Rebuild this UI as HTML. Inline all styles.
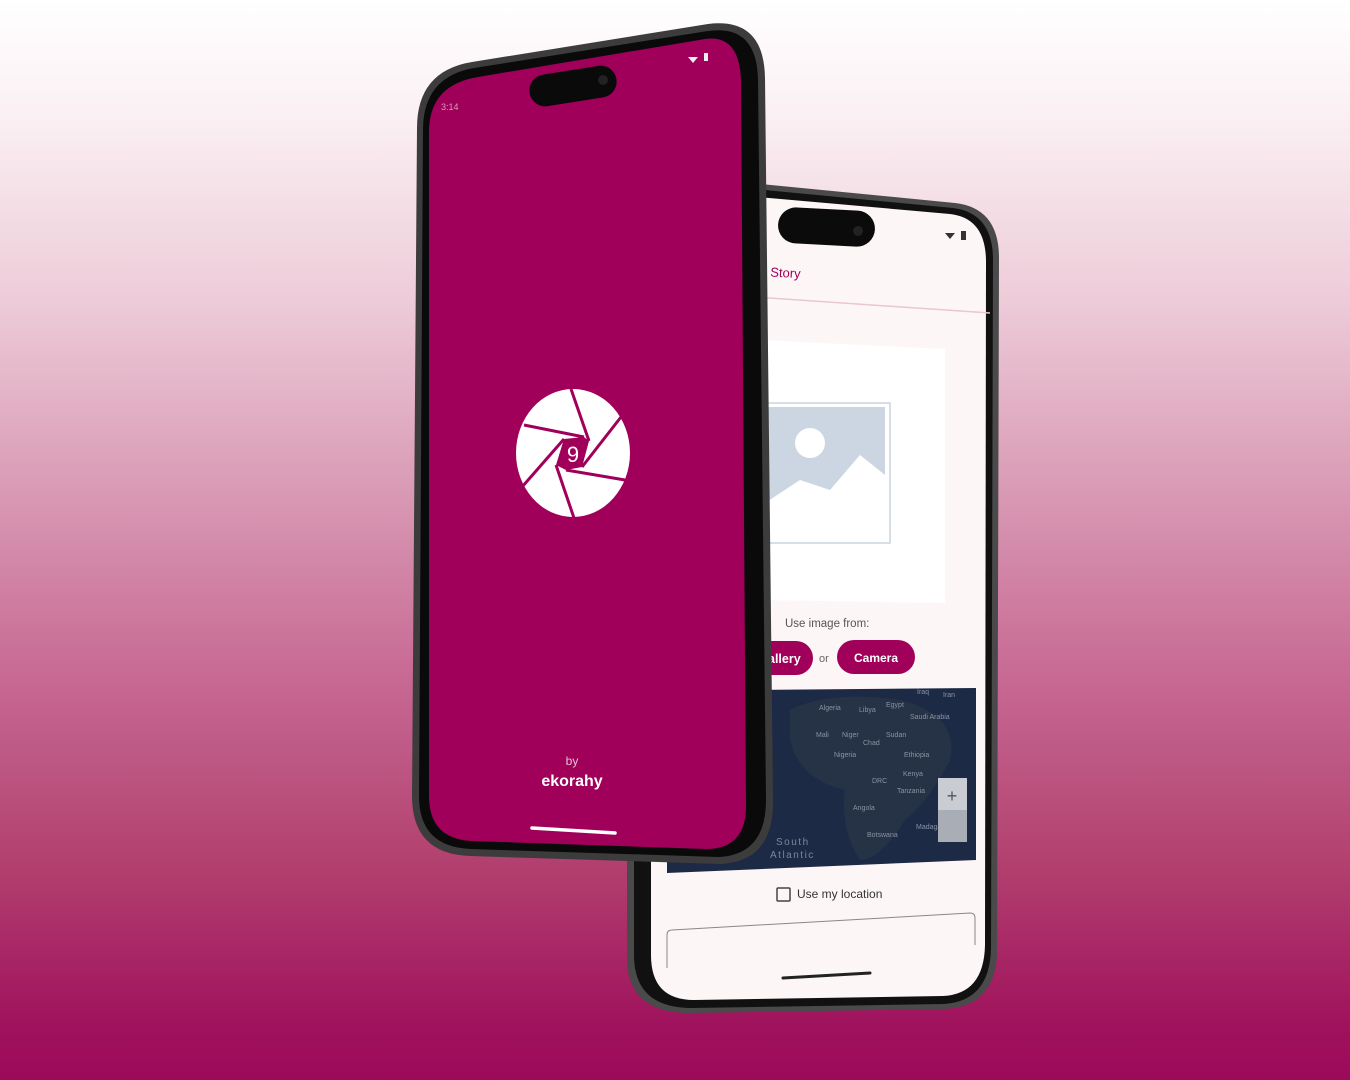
<!DOCTYPE html>
<html><head><meta charset="utf-8"><style>
html,body{margin:0;padding:0;width:1350px;height:1080px;overflow:hidden}
body{background:linear-gradient(180deg,#ffffff 0%,#fbf1f4 10%,#edcbd8 28%,#d99bb5 45%,#c86b95 62%,#b2406f 80%,#a0125d 95%,#9c0a5a 100%);font-family:"Liberation Sans",sans-serif}
svg{position:absolute;left:0;top:0}
</style></head><body>
<svg width="1350" height="1080" viewBox="0 0 1350 1080" xmlns="http://www.w3.org/2000/svg" font-family="Liberation Sans, sans-serif">
<!-- back phone -->
<path d="M700,178 L955,203 Q999,208 999,258 L997,952 Q996,1006 945,1009 L690,1013 Q627,1013 627,958 L627,195 Z" fill="#4a4a4a"/>
<path d="M702,184 L953,208 Q993,213 993,260 L991,948 Q990,1001 944,1004 L692,1008 Q634,1008 634,955 L634,200 Z" fill="#111"/>
<path d="M702,192 L950,214 Q986,218 986,262 L985,945 Q984,994 943,996 L694,1000 Q651,1000 651,955 L651,202 Z" fill="#fdf6f7"/>
<rect x="778" y="209" width="97" height="36" rx="18" fill="#0b0b0b" transform="rotate(3 826 227)"/>
<circle cx="858" cy="231" r="5" fill="#222"/>
<path d="M945,233 l5,6 l5,-6 z" fill="#333"/><rect x="961" y="231" width="5" height="9" fill="#333"/>
<text x="760" y="276" font-size="13" fill="#a0005a" transform="rotate(3 760 276)">v Story</text>
<path d="M740,296 L990,313" stroke="#e9c6d2" stroke-width="1.5"/>
<path d="M760,340 L945,349 L945,603 L760,600 Z" fill="#ffffff"/>
<rect x="760" y="403" width="130" height="140" fill="#fff" stroke="#c9d3e0" stroke-width="1.5"/>
<rect x="762" y="407" width="123" height="130" fill="#ccd6e2"/>
<path d="M762,505 L800,480 L830,490 L860,455 L885,475 L885,537 L762,537 Z" fill="#fff"/>
<circle cx="810" cy="443" r="15" fill="#fff"/>
<text x="785" y="627" font-size="11.5" fill="#555">Use image from:</text>
<rect x="740" y="641" width="73" height="34" rx="17" fill="#a0005a"/>
<text x="768" y="663" font-size="12.5" font-weight="bold" fill="#fff">allery</text>
<text x="819" y="662" font-size="11" fill="#666">or</text>
<rect x="837" y="640" width="78" height="34" rx="17" fill="#a0005a"/>
<text x="876" y="662" font-size="12" font-weight="bold" fill="#fff" text-anchor="middle">Camera</text>
<path d="M740,690 L976,688 L976,860 L667,873 L667,692 Z" fill="#1d2a45"/>
<path d="M790,710 Q830,690 900,700 Q960,715 950,760 Q930,800 905,820 Q880,860 860,860 Q840,830 845,790 Q800,780 790,740 Z" fill="#263246"/>
<g font-size="7" fill="#8a93a3">
<text x="819" y="710">Algeria</text><text x="859" y="712">Libya</text><text x="886" y="707">Egypt</text>
<text x="910" y="719">Saudi Arabia</text><text x="943" y="697">Iran</text><text x="917" y="694">Iraq</text>
<text x="816" y="737">Mali</text><text x="842" y="737">Niger</text><text x="886" y="737">Sudan</text>
<text x="863" y="745">Chad</text><text x="834" y="757">Nigeria</text><text x="904" y="757">Ethiopia</text>
<text x="903" y="776">Kenya</text><text x="872" y="783">DRC</text><text x="897" y="793">Tanzania</text>
<text x="853" y="810">Angola</text><text x="916" y="829">Madagascar</text><text x="867" y="837">Botswana</text>
</g>
<text x="776" y="845" font-size="10" fill="#7d8699" letter-spacing="1.5">South</text>
<text x="770" y="858" font-size="10" fill="#7d8699" letter-spacing="1.5">Atlantic</text>
<rect x="938" y="778" width="29" height="64" fill="#c9ccd2"/>
<rect x="938" y="810" width="29" height="32" fill="#a9adb5"/>
<text x="952" y="802" font-size="18" fill="#555" text-anchor="middle">+</text>
<rect x="777" y="888" width="13" height="13" fill="none" stroke="#444" stroke-width="1.5" rx="1"/>
<text x="797" y="898" font-size="12" fill="#333">Use my location</text>
<path d="M667,968 L667,935 Q667,930 672,930 L970,913 Q975,913 975,918 L975,945" fill="none" stroke="#888" stroke-width="1"/>
<path d="M783,978 L870,973" stroke="#222" stroke-width="3" stroke-linecap="round"/>

<!-- front phone -->
<path d="M472,62 L708,24 Q764,17 765,78 L773,800 Q774,862 720,864 L470,856 Q412,854 412,796 L417,128 Q417,71 472,62 Z" fill="#3c3c3c"/>
<path d="M474,68 L708,31 Q757,24 758,80 L766,800 Q766,855 718,857 L471,849 Q419,847 419,796 L423,130 Q423,77 474,68 Z" fill="#0a0a0a"/>
<path d="M478,77 L705,39 Q740,34 741,82 L746,806 Q746,849 706,849 L472,841 Q429,839 429,796 L429,132 Q429,85 478,77 Z" fill="#a0005a"/>
<rect x="529" y="70" width="88" height="32" rx="16" fill="#0a0a0a" transform="rotate(-9 573 86)"/>
<circle cx="603" cy="80" r="5" fill="#222"/>
<text x="441" y="110" font-size="9" fill="#d0a0b8">3:14</text>
<path d="M688,57 l5,6 l5,-6 z" fill="#eee"/><rect x="704" y="53" width="4" height="8" fill="#eee"/>
<ellipse cx="573" cy="453" rx="57" ry="64" fill="#fff"/>
<g stroke="#a0005a" stroke-width="3">
<line x1="571" y1="389" x2="589" y2="441"/>
<line x1="621" y1="417" x2="582" y2="467"/>
<line x1="625" y1="480" x2="566" y2="470"/>
<line x1="574" y1="518" x2="556" y2="465"/>
<line x1="522" y1="487" x2="564" y2="439"/>
<line x1="524" y1="425" x2="584" y2="437"/>
</g>
<path d="M564,439 L584,437 L589,441 L582,467 L566,470 L556,465 Z" fill="#a0005a"/>
<text x="573" y="462" font-size="22" fill="#fff" text-anchor="middle">9</text>
<text x="572" y="765" font-size="12" fill="#e8c0d4" text-anchor="middle">by</text>
<text x="572" y="786" font-size="16" font-weight="bold" fill="#fff" text-anchor="middle">ekorahy</text>
<path d="M532,828 L615,833" stroke="#fff" stroke-width="3.5" stroke-linecap="round"/>
</svg>
</body></html>
